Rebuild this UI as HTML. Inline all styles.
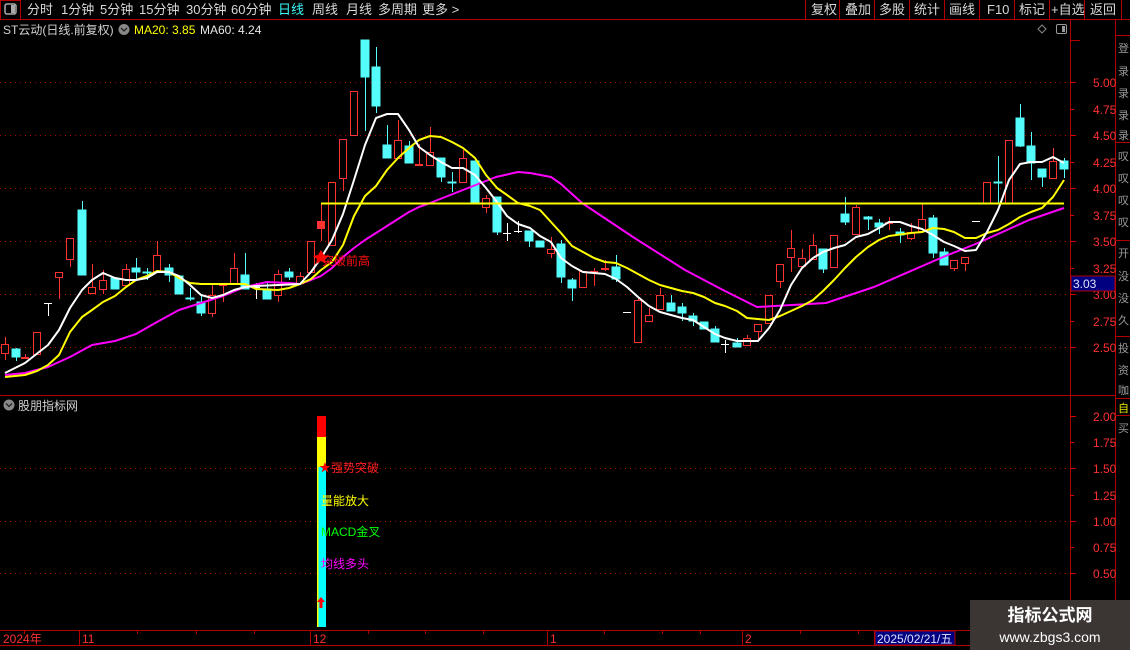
<!DOCTYPE html>
<html><head><meta charset="utf-8"><style>
html,body{margin:0;padding:0;background:#000;width:1130px;height:650px;overflow:hidden;font-family:"Liberation Sans","Noto Sans CJK SC",sans-serif;}
svg{display:block}
</style></head><body>
<svg width="1130" height="650" viewBox="0 0 1130 650" xmlns="http://www.w3.org/2000/svg" font-family="Liberation Sans, Noto Sans CJK SC, sans-serif">
<rect width="1130" height="650" fill="#000"/>
<!-- top bar -->
<line x1="0" y1="19.5" x2="1130" y2="19.5" stroke="#b00000"/>
<rect x="0.5" y="0.5" width="20" height="19" fill="none" stroke="#b00000"/>
<rect x="5" y="4" width="11" height="10" rx="2" fill="none" stroke="#aaa" stroke-width="1.5"/>
<rect x="11" y="5" width="4" height="8" fill="#aaa"/>
<g font-size="13" fill="#d8d8d8">
<text x="27" y="14">分时</text><text x="61" y="14">1分钟</text><text x="100" y="14">5分钟</text><text x="139" y="14">15分钟</text><text x="186" y="14">30分钟</text><text x="231" y="14">60分钟</text>
<text x="278" y="14" fill="#3cf8f8">日线</text><text x="312" y="14">周线</text><text x="346" y="14">月线</text><text x="378" y="14">多周期</text><text x="422" y="14">更多 &gt;</text>
</g>
<g stroke="#b00000"><line x1="805.5" y1="0" x2="805.5" y2="19"/><line x1="839.5" y1="0" x2="839.5" y2="19"/><line x1="874.5" y1="0" x2="874.5" y2="19"/><line x1="909.5" y1="0" x2="909.5" y2="19"/><line x1="944.5" y1="0" x2="944.5" y2="19"/><line x1="979.5" y1="0" x2="979.5" y2="19"/><line x1="1014.5" y1="0" x2="1014.5" y2="19"/><line x1="1049.5" y1="0" x2="1049.5" y2="19"/><line x1="1084.5" y1="0" x2="1084.5" y2="19"/><line x1="1121.5" y1="0" x2="1121.5" y2="19"/></g>
<g font-size="13" fill="#d8d8d8">
<text x="811" y="14">复权</text><text x="845" y="14">叠加</text><text x="879" y="14">多股</text><text x="914" y="14">统计</text><text x="949" y="14">画线</text><text x="987" y="14">F10</text><text x="1019" y="14">标记</text><text x="1051" y="14">+自选</text><text x="1090" y="14">返回</text>
</g>
<!-- info line -->
<text x="3" y="34" font-size="12" fill="#d0d0d0">ST云动(日线.前复权)</text>
<circle cx="124" cy="29.5" r="5.5" fill="#888"/><path d="M121 28 L124 31 L127 28" stroke="#222" fill="none" stroke-width="1.3"/>
<text x="134" y="34" font-size="12" fill="#ffff00">MA20: 3.85</text>
<text x="200" y="34" font-size="12" fill="#e8e8e8">MA60: 4.24</text>
<path d="M1042 25 L1046 29 L1042 33 L1038 29 Z" fill="none" stroke="#888"/>
<rect x="1056.5" y="24.5" width="10" height="9" rx="1.5" fill="none" stroke="#999"/><rect x="1062" y="26" width="3" height="6" fill="#999"/>
<!-- axes -->
<g stroke="#b00000">
<line x1="1070.5" y1="20" x2="1070.5" y2="650"/>
<line x1="1115.5" y1="20" x2="1115.5" y2="650"/>
<line x1="0" y1="395.5" x2="1115" y2="395.5"/>
<line x1="0" y1="630.5" x2="1070" y2="630.5"/>
<line x1="0" y1="645.5" x2="1070" y2="645.5"/>
<line x1="1070" y1="40.5" x2="1080" y2="40.5"/>
</g>
<!-- grid -->
<g stroke="#b00000" stroke-dasharray="1,4">
<line x1="0" y1="82.5" x2="1068" y2="82.5"/><line x1="0" y1="135.5" x2="1068" y2="135.5"/><line x1="0" y1="188.5" x2="1068" y2="188.5"/><line x1="0" y1="241.5" x2="1068" y2="241.5"/><line x1="0" y1="294.5" x2="1068" y2="294.5"/><line x1="0" y1="347.5" x2="1068" y2="347.5"/>
<line x1="0" y1="468.5" x2="1068" y2="468.5"/><line x1="0" y1="521.5" x2="1068" y2="521.5"/><line x1="0" y1="573.5" x2="1068" y2="573.5"/>
</g>
<!-- price scale -->
<g stroke="#d00000">
<line x1="1070" y1="82.5" x2="1076" y2="82.5"/><line x1="1070" y1="109.5" x2="1074" y2="109.5"/><line x1="1070" y1="135.5" x2="1076" y2="135.5"/><line x1="1070" y1="162.5" x2="1074" y2="162.5"/><line x1="1070" y1="188.5" x2="1076" y2="188.5"/><line x1="1070" y1="215.5" x2="1074" y2="215.5"/><line x1="1070" y1="241.5" x2="1076" y2="241.5"/><line x1="1070" y1="268.5" x2="1074" y2="268.5"/><line x1="1070" y1="294.5" x2="1076" y2="294.5"/><line x1="1070" y1="321.5" x2="1074" y2="321.5"/><line x1="1070" y1="347.5" x2="1076" y2="347.5"/>
<line x1="1070" y1="416.5" x2="1076" y2="416.5"/><line x1="1070" y1="442.5" x2="1074" y2="442.5"/><line x1="1070" y1="468.5" x2="1076" y2="468.5"/><line x1="1070" y1="495.5" x2="1074" y2="495.5"/><line x1="1070" y1="521.5" x2="1076" y2="521.5"/><line x1="1070" y1="547.5" x2="1074" y2="547.5"/><line x1="1070" y1="573.5" x2="1076" y2="573.5"/><line x1="1070" y1="600.5" x2="1074" y2="600.5"/>
</g>
<g font-size="12" fill="#ff3030">
<text x="1093" y="87">5.00</text><text x="1093" y="114">4.75</text><text x="1093" y="140">4.50</text><text x="1093" y="167">4.25</text><text x="1093" y="193">4.00</text><text x="1093" y="220">3.75</text><text x="1093" y="246">3.50</text><text x="1093" y="273">3.25</text><text x="1093" y="299">3.00</text><text x="1093" y="326">2.75</text><text x="1093" y="352">2.50</text>
<text x="1093" y="421">2.00</text><text x="1093" y="447">1.75</text><text x="1093" y="473">1.50</text><text x="1093" y="500">1.25</text><text x="1093" y="526">1.00</text><text x="1093" y="552">0.75</text><text x="1093" y="578">0.50</text>
</g>
<rect x="1071" y="276" width="44" height="15" fill="#000080" stroke="#b00000"/>
<text x="1073" y="288" font-size="12" fill="#e0e0ff">3.03</text>
<!-- right side panel -->
<g stroke="#b00000"><line x1="1115" y1="35.5" x2="1130" y2="35.5"/><line x1="1115" y1="142.5" x2="1130" y2="142.5"/><line x1="1115" y1="240.5" x2="1130" y2="240.5"/><line x1="1115" y1="336.5" x2="1130" y2="336.5"/><line x1="1115" y1="398.5" x2="1130" y2="398.5"/><line x1="1115" y1="415.5" x2="1130" y2="415.5"/></g>
<g font-size="11" fill="#999">
<text x="1118" y="52">登</text><text x="1118" y="75">录</text><text x="1118" y="97">录</text><text x="1118" y="119">录</text><text x="1118" y="139">录</text>
<text x="1118" y="160">叹</text><text x="1118" y="182">叹</text><text x="1118" y="204">叹</text><text x="1118" y="226">叹</text>
<text x="1118" y="257">开</text><text x="1118" y="280">没</text><text x="1118" y="302">没</text><text x="1118" y="324">久</text>
<text x="1118" y="352">投</text><text x="1118" y="374">资</text><text x="1118" y="394">咖</text>
<text x="1118" y="412" fill="#e8e800">自</text><text x="1118" y="432">买</text>
</g>
<!-- candles -->
<g shape-rendering="crispEdges" stroke-width="1">
<g stroke="#ff3232" fill="#000">
<line x1="5.5" y1="337" x2="5.5" y2="360"/><rect x="1.5" y="344.5" width="7" height="9"/>
<line x1="25.5" y1="354" x2="25.5" y2="359"/><rect x="21.5" y="357.5" width="7" height="1"/>
<rect x="33.5" y="332.5" width="7" height="22"/>
<line x1="59.5" y1="272" x2="59.5" y2="299"/><rect x="55.5" y="272.5" width="7" height="5"/>
<line x1="70.5" y1="238" x2="70.5" y2="267"/><rect x="66.5" y="238.5" width="7" height="21"/>
<line x1="92.5" y1="264" x2="92.5" y2="293"/><rect x="88.5" y="287.5" width="7" height="6"/>
<line x1="103.5" y1="270" x2="103.5" y2="294"/><rect x="99.5" y="280.5" width="7" height="9"/>
<line x1="126.5" y1="264" x2="126.5" y2="285"/><rect x="122.5" y="269.5" width="7" height="16"/>
<line x1="157.5" y1="241" x2="157.5" y2="272"/><rect x="153.5" y="255.5" width="7" height="16"/>
<line x1="212.5" y1="284" x2="212.5" y2="317"/><rect x="208.5" y="295.5" width="7" height="18"/>
<line x1="223.5" y1="283" x2="223.5" y2="302"/><rect x="219.5" y="283.5" width="7" height="2"/>
<line x1="234.5" y1="253" x2="234.5" y2="283"/><rect x="230.5" y="268.5" width="7" height="15"/>
<line x1="278.5" y1="270" x2="278.5" y2="302"/><rect x="274.5" y="274.5" width="7" height="21"/>
<line x1="300.5" y1="272" x2="300.5" y2="283"/><rect x="296.5" y="276.5" width="7" height="7"/>
<rect x="307.5" y="241.5" width="7" height="31"/>
<line x1="321.5" y1="204" x2="321.5" y2="241"/><rect x="317.5" y="221.5" width="7" height="7" fill="#ff3232"/>
<rect x="328.5" y="182.5" width="7" height="63"/>
<line x1="343.5" y1="139" x2="343.5" y2="191"/><rect x="339.5" y="139.5" width="7" height="39"/>
<rect x="350.5" y="91.5" width="7" height="44"/>
<line x1="398.5" y1="120" x2="398.5" y2="158"/><rect x="394.5" y="140.5" width="7" height="18"/>
<line x1="419.5" y1="144" x2="419.5" y2="165"/><rect x="415.5" y="164.5" width="7" height="1"/>
<line x1="430.5" y1="127" x2="430.5" y2="165"/><rect x="426.5" y="152.5" width="7" height="13"/>
<line x1="463.5" y1="150" x2="463.5" y2="182"/><rect x="459.5" y="158.5" width="7" height="24"/>
<line x1="486.5" y1="195" x2="486.5" y2="213"/><rect x="482.5" y="198.5" width="7" height="9"/>
<line x1="551.5" y1="237" x2="551.5" y2="258"/><rect x="547.5" y="249.5" width="7" height="4"/>
<rect x="579.5" y="271.5" width="7" height="16"/>
<line x1="594.5" y1="268" x2="594.5" y2="286"/><rect x="590.5" y="271.5" width="7" height="1"/>
<line x1="605.5" y1="260" x2="605.5" y2="271"/><rect x="601.5" y="268.5" width="7" height="1"/>
<line x1="638.5" y1="297" x2="638.5" y2="342"/><rect x="634.5" y="300.5" width="7" height="42"/>
<line x1="649.5" y1="308" x2="649.5" y2="322"/><rect x="645.5" y="315.5" width="7" height="6"/>
<line x1="660.5" y1="288" x2="660.5" y2="309"/><rect x="656.5" y="295.5" width="7" height="14"/>
<line x1="747.5" y1="335" x2="747.5" y2="345"/><rect x="743.5" y="338.5" width="7" height="7"/>
<line x1="758.5" y1="324" x2="758.5" y2="340"/><rect x="754.5" y="324.5" width="7" height="7"/>
<rect x="765.5" y="295.5" width="7" height="28"/>
<line x1="780.5" y1="264" x2="780.5" y2="288"/><rect x="776.5" y="264.5" width="7" height="17"/>
<line x1="791.5" y1="230" x2="791.5" y2="272"/><rect x="787.5" y="248.5" width="7" height="9"/>
<line x1="802.5" y1="249" x2="802.5" y2="266"/><rect x="798.5" y="258.5" width="7" height="8"/>
<line x1="813.5" y1="234" x2="813.5" y2="259"/><rect x="809.5" y="245.5" width="7" height="14"/>
<rect x="830.5" y="235.5" width="7" height="32"/>
<line x1="856.5" y1="205" x2="856.5" y2="234"/><rect x="852.5" y="207.5" width="7" height="27"/>
<line x1="889.5" y1="217" x2="889.5" y2="230"/><rect x="885.5" y="222.5" width="7" height="1"/>
<line x1="911.5" y1="223" x2="911.5" y2="240"/><rect x="907.5" y="232.5" width="7" height="6"/>
<line x1="922.5" y1="204" x2="922.5" y2="231"/><rect x="918.5" y="219.5" width="7" height="12"/>
<line x1="954.5" y1="260" x2="954.5" y2="271"/><rect x="950.5" y="260.5" width="7" height="8"/>
<line x1="965.5" y1="257" x2="965.5" y2="271"/><rect x="961.5" y="257.5" width="7" height="6"/>
<rect x="983.5" y="182.5" width="7" height="21"/>
<rect x="1005.5" y="140.5" width="7" height="63"/>
<line x1="1053.5" y1="148" x2="1053.5" y2="178"/><rect x="1049.5" y="161.5" width="7" height="17"/>
</g>
<g stroke="#54fcfc" fill="#54fcfc">
<line x1="16.5" y1="348" x2="16.5" y2="361"/><rect x="12" y="349" width="8" height="8"/>
<line x1="82.5" y1="201" x2="82.5" y2="275"/><rect x="78" y="210" width="8" height="65"/>
<rect x="111" y="278" width="8" height="11"/>
<line x1="136.5" y1="258" x2="136.5" y2="280"/><rect x="132" y="268" width="8" height="4"/>
<line x1="147.5" y1="268" x2="147.5" y2="280"/><rect x="143" y="272" width="8" height="1"/>
<line x1="169.5" y1="264" x2="169.5" y2="282"/><rect x="165" y="268" width="8" height="7"/>
<rect x="175" y="276" width="8" height="18"/>
<line x1="190.5" y1="288" x2="190.5" y2="301"/><rect x="186" y="298" width="8" height="1"/>
<line x1="201.5" y1="295" x2="201.5" y2="316"/><rect x="197" y="302" width="8" height="11"/>
<line x1="245.5" y1="253" x2="245.5" y2="289"/><rect x="241" y="275" width="8" height="14"/>
<line x1="267.5" y1="283" x2="267.5" y2="299"/><rect x="263" y="289" width="8" height="10"/>
<line x1="289.5" y1="268" x2="289.5" y2="280"/><rect x="285" y="272" width="8" height="5"/>
<line x1="365.5" y1="40" x2="365.5" y2="131"/><rect x="361" y="40" width="8" height="37"/>
<line x1="376.5" y1="47" x2="376.5" y2="113"/><rect x="372" y="67" width="8" height="39"/>
<line x1="387.5" y1="125" x2="387.5" y2="158"/><rect x="383" y="145" width="8" height="13"/>
<line x1="409.5" y1="141" x2="409.5" y2="163"/><rect x="405" y="146" width="8" height="17"/>
<line x1="441.5" y1="158" x2="441.5" y2="182"/><rect x="437" y="158" width="8" height="19"/>
<line x1="452.5" y1="172" x2="452.5" y2="192"/><rect x="448" y="182" width="8" height="1"/>
<rect x="471" y="161" width="8" height="42"/>
<line x1="497.5" y1="197" x2="497.5" y2="235"/><rect x="493" y="197" width="8" height="35"/>
<line x1="529.5" y1="231" x2="529.5" y2="247"/><rect x="525" y="231" width="8" height="10"/>
<rect x="536" y="241" width="8" height="6"/>
<line x1="561.5" y1="240" x2="561.5" y2="283"/><rect x="557" y="244" width="8" height="33"/>
<line x1="572.5" y1="278" x2="572.5" y2="301"/><rect x="568" y="280" width="8" height="8"/>
<line x1="616.5" y1="255" x2="616.5" y2="282"/><rect x="612" y="267" width="8" height="12"/>
<line x1="671.5" y1="295" x2="671.5" y2="311"/><rect x="667" y="303" width="8" height="8"/>
<line x1="682.5" y1="303" x2="682.5" y2="321"/><rect x="678" y="307" width="8" height="6"/>
<line x1="693.5" y1="313" x2="693.5" y2="326"/><rect x="689" y="316" width="8" height="5"/>
<rect x="700" y="322" width="8" height="7"/>
<line x1="715.5" y1="326" x2="715.5" y2="342"/><rect x="711" y="329" width="8" height="13"/>
<line x1="737.5" y1="338" x2="737.5" y2="347"/><rect x="733" y="343" width="8" height="4"/>
<line x1="823.5" y1="249" x2="823.5" y2="273"/><rect x="819" y="249" width="8" height="20"/>
<line x1="845.5" y1="197" x2="845.5" y2="225"/><rect x="841" y="214" width="8" height="8"/>
<line x1="868.5" y1="216" x2="868.5" y2="230"/><rect x="864" y="217" width="8" height="2"/>
<line x1="879.5" y1="219" x2="879.5" y2="234"/><rect x="875" y="223" width="8" height="4"/>
<line x1="900.5" y1="228" x2="900.5" y2="243"/><rect x="896" y="232" width="8" height="3"/>
<line x1="933.5" y1="215" x2="933.5" y2="258"/><rect x="929" y="218" width="8" height="35"/>
<line x1="944.5" y1="248" x2="944.5" y2="265"/><rect x="940" y="252" width="8" height="13"/>
<line x1="998.5" y1="156" x2="998.5" y2="203"/><rect x="994" y="182" width="8" height="1"/>
<line x1="1020.5" y1="104" x2="1020.5" y2="147"/><rect x="1016" y="118" width="8" height="28"/>
<line x1="1031.5" y1="132" x2="1031.5" y2="180"/><rect x="1027" y="146" width="8" height="17"/>
<line x1="1042.5" y1="169" x2="1042.5" y2="187"/><rect x="1038" y="169" width="8" height="8"/>
<line x1="1064.5" y1="158" x2="1064.5" y2="178"/><rect x="1060" y="161" width="8" height="8"/>
</g>
<g stroke="#fff">
<line x1="44" y1="303.5" x2="52" y2="303.5"/><line x1="48.5" y1="303" x2="48.5" y2="316"/>
<line x1="252" y1="287.5" x2="260" y2="287.5"/><line x1="256.5" y1="283" x2="256.5" y2="299"/>
<line x1="503" y1="233.5" x2="511" y2="233.5"/><line x1="507.5" y1="223" x2="507.5" y2="241"/>
<line x1="514" y1="231.5" x2="522" y2="231.5"/><line x1="518.5" y1="221" x2="518.5" y2="233"/>
<line x1="623" y1="312.5" x2="631" y2="312.5"/>
<line x1="721" y1="344.5" x2="729" y2="344.5"/><line x1="725.5" y1="340" x2="725.5" y2="353"/>
<line x1="972" y1="221.5" x2="980" y2="221.5"/>
</g>
</g>
<!-- MA lines -->
<g fill="none" stroke-width="2" stroke-linejoin="round">
<polyline stroke="#ff00ff" points="5,375 25,373 48,367 70,357 92,345 115,341 136,334 157,322 179,310 201,303 223,296 245,287 267,282 289,283 300,284 311,280 321,276 332,268 343,257 354,248 365,240 376,233 387,226 398,219 409,212 419,207 430,203 463,190 496,177 518,172 530,173 551,177 561,184 582,203 633,237 685,270 723,290 757,307 826,303 874,287 943,257 978,243 1029,220 1064,208"/>
<polyline stroke="#ffff00" points="5,377 25,375 37,371 48,365 59,355 70,332 82,317 92,310 103,302 115,296 126,287 136,280 147,276 157,271 169,272 179,278 190,283 201,284 245,284 256,289 278,290 289,288 300,284 311,279 321,270 332,262 343,245 354,216 365,196 376,186 387,170 398,158 409,148 419,140 430,136 441,137 452,142 463,148 475,158 486,175 497,188 507,195 518,203 530,206 540,210 551,222 561,233 572,246 583,252 594,258 605,262 616,263 627,268 638,274 649,280 660,285 671,288 682,291 693,293 704,297 715,303 725,306 737,311 747,318 769,320 780,316 791,311 802,306 813,300 823,291 834,280 845,268 856,257 868,247 879,240 889,236 911,233 922,232 933,228 944,229 954,232 965,238 976,238 987,233 998,230 1009,224 1020,217 1031,212 1042,208 1053,197 1064,180"/>
<polyline stroke="#ffffff" points="5,373 25,363 48,345 59,330 70,308 82,290 92,280 103,273 115,278 126,280 136,280 147,278 157,272 169,272 179,276 190,285 201,295 212,298 223,295 234,290 245,287 256,286 300,284 311,272 321,258 332,240 343,214 354,180 365,145 376,118 387,114 398,114 409,130 419,147 430,155 441,162 452,168 463,168 475,175 486,188 497,202 507,216 518,224 530,228 540,236 551,242 561,258 572,266 583,272 605,274 616,279 627,287 638,297 649,306 660,312 671,315 682,318 693,320 704,327 715,334 725,338 737,341 758,341 769,328 780,310 791,285 802,268 813,258 823,252 834,248 845,245 856,237 868,234 879,228 889,222 900,222 911,226 922,229 933,235 944,242 954,246 965,251 976,250 987,232 998,210 1009,180 1020,164 1031,162 1042,162 1053,157 1064,163"/>
</g>
<line x1="321" y1="203.5" x2="1064" y2="203.5" stroke="#ffff00" stroke-width="2"/>
<path d="M321 250 L324 255 L329 256 L325 259 L326 264 L321 261 L316 264 L317 259 L313 256 L318 255 Z" fill="#ff0000"/>
<text x="322" y="265" font-size="12" fill="#ff1010">突破前高</text>
<!-- lower panel -->
<circle cx="9" cy="405" r="5.5" fill="#888"/><path d="M6 403.5 L9 406.5 L12 403.5" stroke="#222" fill="none" stroke-width="1.3"/>
<text x="18" y="410" font-size="12" fill="#d0d0d0">股朋指标网</text>
<rect x="317" y="416" width="9" height="21" fill="#ff0000"/>
<rect x="317" y="437" width="9" height="30" fill="#ffff00"/>
<rect x="317" y="467" width="9" height="160" fill="#00ffff"/>
<rect x="317" y="467" width="1.5" height="160" fill="#ffff00"/>
<path d="M321 597 L325 602 L322.5 602 L322.5 608 L319.5 608 L319.5 602 L317 602 Z" fill="#ff0000"/>
<path d="M325 462 L326.5 466 L330.5 466 L327 468.5 L328.5 472.5 L325 470 L321.5 472.5 L323 468.5 L319.5 466 L323.5 466 Z" fill="#ff0000"/>
<text x="331" y="472" font-size="12" fill="#ff2020">强势突破</text>
<text x="321" y="505" font-size="12" fill="#ffff00">量能放大</text>
<text x="321" y="536" font-size="12" fill="#00ff00">MACD金叉</text>
<text x="321" y="568" font-size="12" fill="#ff00ff">均线多头</text>
<!-- date axis -->
<g stroke="#b00000">
<line x1="79.5" y1="630" x2="79.5" y2="645"/><line x1="310.5" y1="630" x2="310.5" y2="645"/><line x1="547.5" y1="630" x2="547.5" y2="645"/><line x1="742.5" y1="630" x2="742.5" y2="645"/><line x1="874.5" y1="630" x2="874.5" y2="645"/>
<line x1="24.5" y1="630" x2="24.5" y2="634"/><line x1="137.5" y1="630" x2="137.5" y2="634"/><line x1="196.5" y1="630" x2="196.5" y2="634"/><line x1="254.5" y1="630" x2="254.5" y2="634"/><line x1="368.5" y1="630" x2="368.5" y2="634"/><line x1="425.5" y1="630" x2="425.5" y2="634"/><line x1="483.5" y1="630" x2="483.5" y2="634"/><line x1="604.5" y1="630" x2="604.5" y2="634"/><line x1="662.5" y1="630" x2="662.5" y2="634"/><line x1="700.5" y1="630" x2="700.5" y2="634"/><line x1="800.5" y1="630" x2="800.5" y2="634"/><line x1="858.5" y1="630" x2="858.5" y2="634"/>
</g>
<g font-size="12" fill="#ff3030">
<text x="3" y="643">2024年</text><text x="82" y="643">11</text><text x="313" y="643">12</text><text x="550" y="643">1</text><text x="745" y="643">2</text>
</g>
<rect x="875" y="631" width="80" height="14" fill="#000080" stroke="#b00000"/>
<text x="877" y="643" font-size="12" fill="#e0e0ff">2025/02/21/五</text>
<!-- watermark -->
<rect x="970" y="600" width="160" height="50" fill="#3b3634"/>
<text x="1050" y="621" font-size="17" font-weight="bold" fill="#fff" text-anchor="middle">指标公式网</text>
<text x="1050" y="642" font-size="14" fill="#fff" text-anchor="middle">www.zbgs3.com</text>
</svg>
</body></html>
